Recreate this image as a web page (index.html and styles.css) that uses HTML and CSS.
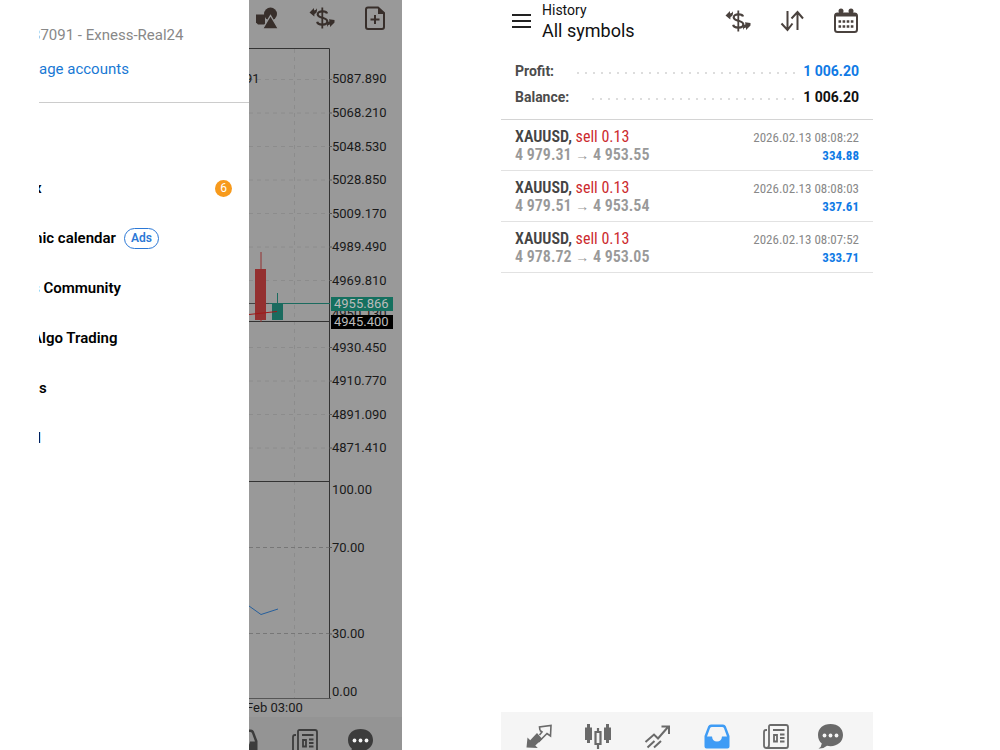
FILE: index.html
```
<!DOCTYPE html>
<html lang="en">
<head>
<meta charset="utf-8">
<meta name="viewport" content="width=device-width, initial-scale=1">
<title>History</title>
<link rel="stylesheet" href="styles.css">
</head>
<body>
<svg class="sprite" aria-hidden="true">
  <symbol id="i-dollar" viewBox="0 0 26 24">
    <path d="M18 7.500C17.500 4.700 8.500 4.300 8.700 8.500 8.900 12.500 18.300 11 18.300 15.300 18.300 19.800 8.800 19.500 8.200 15.800" fill="none" stroke="currentColor" stroke-width="2.200"/>
    <path d="M13.300 1.500v21" stroke="currentColor" stroke-width="1.800"/>
    <path d="M0.500 6.500 5 2v2.600q2.500-.3 3-2.300Q8.500 7.300 5.500 8l-.2 2.500zM25.500 16.500 21 21v-2.500q-2.500.3-3 2.500-.5-5 2.500-5.800l-.5-2 5.500.8z" fill="currentColor"/>
  </symbol>
  <symbol id="i-sort" viewBox="0 0 26 24">
    <path d="M8.500 2v19M2.500 14.500l6 6.500 5-6.500M18.500 21V3M12.500 9.500l6-6.500 5.500 6.500" fill="none" stroke="currentColor" stroke-width="2"/>
  </symbol>
  <symbol id="i-calendar" viewBox="0 0 26 26">
    <rect x="2" y="5.500" width="22" height="18.500" rx="2.500" fill="none" stroke="currentColor" stroke-width="2"/>
    <path d="M2 5.500h22v3H2z" fill="currentColor"/>
    <circle cx="8" cy="3" r="2.500" fill="currentColor"/><circle cx="18" cy="3" r="2.500" fill="currentColor"/>
    <path d="M5.500 13.500h2.600m1.500 0h2.600m1.500 0h2.600m1.500 0h2.600M5.500 18.500h2.600m1.500 0h2.600m1.500 0h2.600m1.500 0h2.600" stroke="currentColor" stroke-width="2.600"/>
  </symbol>
  <symbol id="i-shapes" viewBox="0 0 24 24">
    <circle cx="15.500" cy="8" r="6.500" fill="currentColor"/>
    <path d="M1 8.500h9v10H3l-2-2z" fill="currentColor"/>
    <path d="M15.500 9.500 23.500 23H7.500z" fill="currentColor" stroke="#999" stroke-width="1.400"/>
  </symbol>
  <symbol id="i-newdoc" viewBox="0 0 22 26">
    <path d="M4 2.500h10l6 5.500v14q0 2-2 2H4q-2 0-2-2V4.500q0-2 2-2z" fill="none" stroke="currentColor" stroke-width="2"/>
    <path d="M14 2v7h6.500z" fill="currentColor"/>
    <path d="M11 10v9M6.500 14.500h9" stroke="currentColor" stroke-width="2"/>
  </symbol>
  <symbol id="i-quotes" viewBox="0 0 26 26">
    <path d="M.500 23.500 1.500 13.500l2.700 2.700 6.800-7.200 5.300 6-7 6.600 2.500 2.500z" fill="currentColor"/>
    <path d="M14 6.500 16 8l-2.500 3M14 6.500 13.500 3 25 1.500 24.500 12l-3.500-2.500-8.500 8.500" fill="none" stroke="currentColor" stroke-width="1.600"/>
  </symbol>
  <symbol id="i-candles" viewBox="0 0 26 26">
    <path d="M0 3.500h2V0h3v3.500h2V16H5v3H2v-3H0zM19 3.500h2V0h3v3.500h2V16h-2v3h-3v-3h-2z" fill="currentColor"/>
    <path d="M10.500 8h5v12h-5zM13 4v4M13 20v5" fill="none" stroke="currentColor" stroke-width="2.200"/>
  </symbol>
  <symbol id="i-trend" viewBox="0 0 26 26">
    <path d="M1.500 18 10 10.500l4 4L24 3M17.500 2.500H25v7.500M3.500 23.500l7-6.500M10 23.500l7-6.500" fill="none" stroke="currentColor" stroke-width="2"/>
  </symbol>
  <symbol id="i-inbox" viewBox="0 0 26 26">
    <path fill-rule="evenodd" d="M7 .500h12q2 0 2.800 1.800L25.500 12v10.500q0 2-2 2h-21q-2 0-2-2V12L4.200 2.300Q5 .500 7 .500zM8 3q-1.500 0-2 1.200L3 12.500h5q.5 5 5 5t5-5h5L20 4.200Q19.500 3 18 3z" fill="currentColor"/>
  </symbol>
  <symbol id="i-news" viewBox="0 0 26 26">
    <path d="M7.500 1h15.500q2 0 2 2v19q0 2-2 2H3.500Q6 24 6 21V2.500Q6 1 7.500 1zM4 6H3Q1 6 1 8v13.500Q1 24 3.500 24" fill="none" stroke="currentColor" stroke-width="1.800"/>
    <path d="M10 6h11.500M17 10.500h4.500M17 14h4.500M17 17.500h4.500M11 11h3v6.500h-3z" fill="none" stroke="currentColor" stroke-width="1.800"/>
  </symbol>
  <symbol id="i-chat" viewBox="0 0 26 26">
    <path d="M13.500 0C6 0 1 4.500 1 11c0 4 1.500 6.500 3.800 8.500Q4.500 23 1.500 24.500 6.500 25 10 21.800C19 23.500 26 18.500 26 11 26 4.500 21 0 13.500 0z" fill="currentColor"/>
    <circle cx="7.500" cy="11.500" r="1.900" class="chat-dot"/><circle cx="13.500" cy="11.500" r="1.900" class="chat-dot"/><circle cx="19.500" cy="11.500" r="1.900" class="chat-dot"/>
  </symbol>
</svg>

<main class="stage">
  <section class="phone phone-drawer">
    <aside class="drawer">
      <header class="account">
        <p class="account-name cut">37091 - Exness-Real24</p>
        <a class="account-link" href="#">age accounts</a>
      </header>
      <nav class="menu">
        <a class="menu-item" href="#"><span class="cut-half">x</span><span class="count">6</span></a>
        <a class="menu-item" href="#"><span class="cut-half">nic calendar</span><span class="ads">Ads</span></a>
        <a class="menu-item" href="#"><span class="cut">s Community</span></a>
        <a class="menu-item" href="#"><span class="cut">Algo Trading</span></a>
        <a class="menu-item" href="#"><span>s</span></a>
        <a class="menu-item" href="#"><span class="cut-short">l</span></a>
      </nav>
    </aside>

    <div class="chart">
      <div class="chart-tools">
        <button class="icon-button" aria-label="Objects"><svg width="24" height="24"><use href="#i-shapes"/></svg></button>
        <button class="icon-button" aria-label="Trade"><svg width="26" height="24"><use href="#i-dollar"/></svg></button>
        <button class="icon-button" aria-label="New order"><svg width="22" height="26"><use href="#i-newdoc"/></svg></button>
      </div>
      <svg class="plot" viewBox="0 40 153 677" role="img" aria-label="Price chart">
        <g class="grid">
          <path d="M45.500 49v650M0 79.500h80M0 113h80M0 146.500h80M0 180h80M0 213.500h80M0 247h80M0 280.500h80M0 347.500h80M0 381h80M0 414.500h80M0 448h80"/>
        </g>
        <path class="level" d="M0 547.500h80M0 633.500h80"/>
        <path class="frame" d="M0 48.500h80.500V699M0 481.500h80"/>
        <path class="tick" d="M0 698.500h82M80 79.500h3M80 113h3M80 146.500h3M80 180h3M80 213.500h3M80 247h3M80 280.500h3M80 347.500h3M80 381h3M80 414.500h3M80 448h3M80 547.500h3M80 634h3"/>
        <path class="ask" d="M0 303.500h20"/>
        <path class="bid" d="M20 303.500h61"/>
        <path class="frame" d="M0 321.500h81"/>
        <path class="wick-down" d="M12 252v70"/><rect class="down" x="6" y="269" width="11" height="51"/>
        <path class="wick-up" d="M28.500 293v11"/><rect class="up" x="23" y="304" width="11" height="16"/>
        <path class="average" d="M0 314.500 28 311.500"/>
        <path class="rsi" d="M0 606 12 614.500 29 609"/>
        <g class="scale">
          <text x="-4" y="83">91</text>
          <text x="83" y="83">5087.890</text>
          <text x="83" y="117">5068.210</text>
          <text x="83" y="151">5048.530</text>
          <text x="83" y="184">5028.850</text>
          <text x="83" y="218">5009.170</text>
          <text x="83" y="251">4989.490</text>
          <text x="83" y="285">4969.810</text>
          <text x="83" y="318">4950.130</text>
          <text x="83" y="352">4930.450</text>
          <text x="83" y="385">4910.770</text>
          <text x="83" y="419">4891.090</text>
          <text x="83" y="452">4871.410</text>
          <text x="83" y="494">100.00</text>
          <text x="83" y="552">70.00</text>
          <text x="83" y="638">30.00</text>
          <text x="83" y="696">0.00</text>
          <text x="-3" y="712">Feb 03:00</text>
        </g>
        <rect class="tag-bid" x="82" y="297" width="62" height="14"/>
        <rect class="tag-last" x="82" y="315" width="62" height="14"/>
        <g class="tag-text"><text x="85" y="308">4955.866</text><text x="85" y="326">4945.400</text></g>
      </svg>
      <nav class="tabs tabs-dim">
        <button class="tab" aria-label="History"><svg width="26" height="26"><use href="#i-inbox"/></svg></button>
        <button class="tab" aria-label="News"><svg width="26" height="26"><use href="#i-news"/></svg></button>
        <button class="tab" aria-label="Messages"><svg width="26" height="26"><use href="#i-chat"/></svg></button>
      </nav>
    </div>
  </section>

  <section class="phone phone-history">
    <header class="topbar">
      <button class="icon-button" aria-label="Menu"><svg width="20" height="16"><path d="M0 2h19M0 8h19M0 14h19" stroke="#222" stroke-width="2"/></svg></button>
      <div class="titles">
        <p class="subtitle">History</p>
        <h1 class="title">All symbols</h1>
      </div>
      <div class="actions">
        <button class="icon-button" aria-label="Symbols"><svg width="26" height="24"><use href="#i-dollar"/></svg></button>
        <button class="icon-button" aria-label="Sort"><svg width="26" height="24"><use href="#i-sort"/></svg></button>
        <button class="icon-button" aria-label="Period"><svg width="26" height="26"><use href="#i-calendar"/></svg></button>
      </div>
    </header>
    <div class="summary">
      <div class="summary-row"><span>Profit:</span><span class="leader"></span><span class="gain">1 006.20</span></div>
      <div class="summary-row"><span>Balance:</span><span class="leader"></span><span class="total">1 006.20</span></div>
    </div>
    <ul class="deals">
      <li class="deal">
        <div><p class="symbol">XAUUSD, <span class="side">sell 0.13</span></p><p class="prices">4 979.31 <span class="arrow">→</span> 4 953.55</p></div>
        <div class="result"><time class="time">2026.02.13 08:08:22</time><p class="profit">334.88</p></div>
      </li>
      <li class="deal">
        <div><p class="symbol">XAUUSD, <span class="side">sell 0.13</span></p><p class="prices">4 979.51 <span class="arrow">→</span> 4 953.54</p></div>
        <div class="result"><time class="time">2026.02.13 08:08:03</time><p class="profit">337.61</p></div>
      </li>
      <li class="deal">
        <div><p class="symbol">XAUUSD, <span class="side">sell 0.13</span></p><p class="prices">4 978.72 <span class="arrow">→</span> 4 953.05</p></div>
        <div class="result"><time class="time">2026.02.13 08:07:52</time><p class="profit">333.71</p></div>
      </li>
    </ul>
    <nav class="tabs">
      <button class="tab" aria-label="Quotes"><svg width="26" height="26"><use href="#i-quotes"/></svg></button>
      <button class="tab" aria-label="Chart"><svg width="26" height="26"><use href="#i-candles"/></svg></button>
      <button class="tab" aria-label="Trade"><svg width="26" height="26"><use href="#i-trend"/></svg></button>
      <button class="tab tab-active" aria-label="History"><svg width="26" height="26"><use href="#i-inbox"/></svg></button>
      <button class="tab" aria-label="News"><svg width="26" height="26"><use href="#i-news"/></svg></button>
      <button class="tab" aria-label="Messages"><svg width="26" height="26"><use href="#i-chat"/></svg></button>
    </nav>
  </section>
</main>
</body>
</html>
```
FILE: styles.css
```
* { box-sizing: border-box; }
body { margin: 0; background: #fff; color: #111; font-family: Roboto, "Liberation Sans", sans-serif; font-size: 14px; }
p, h1, ul { margin: 0; padding: 0; font-weight: 400; list-style: none; }
a { color: inherit; text-decoration: none; }
button { border: 0; padding: 0; background: none; color: inherit; font: inherit; }
svg { display: block; }
.sprite { position: absolute; width: 0; height: 0; }

.stage { display: grid; grid-template-columns: 363fr 372fr; column-gap: 9.9vw; height: 100vh; padding: 0 12.7vw 0 3.9vw; overflow: hidden; }
.phone { display: flex; min-width: 0; min-height: 0; overflow: hidden; }

/* Drawer */
.drawer { flex: 1; min-width: 0; overflow: hidden; font-size: 15px; }
.cut { margin-left: -7px; }
.cut-half { margin-left: -5px; }
.cut-short { margin-left: -2px; }
.account { padding-top: 24px; height: 103px; border-bottom: 1px solid #ccc; white-space: nowrap; }
.account-name { color: #888; line-height: 22px; }
.account-link { display: block; margin-top: 12px; color: #1878d4; line-height: 22px; }
.menu { padding-top: 60px; }
.menu-item { display: flex; align-items: center; height: 50px; color: #000; font-weight: 600; white-space: nowrap; }
.count { display: grid; place-items: center; width: 17px; height: 17px; margin: 0 17px 0 auto; border-radius: 50%; background: #f79a1c; color: #fff; font-size: 12px; font-weight: 400; }
.ads { margin-left: 8px; padding: 0 6px; border: 1px solid #2b78d6; border-radius: 11px; color: #2b78d6; font-size: 12px; line-height: 19px; }

/* Chart */
.chart { display: flex; flex: none; flex-direction: column; width: 153px; background: #999; }
.chart-tools { display: flex; align-items: center; justify-content: space-between; height: 40px; padding: 0 16px 4px 6px; color: #382f2b; }
.plot { flex: none; width: 100%; }
.plot path { fill: none; stroke-width: 1; }
.grid path { stroke: #8c8c8c; stroke-dasharray: 4 4; }
.level { stroke: #777; stroke-dasharray: 4 3; }
.frame { stroke: #333; }
.tick { stroke: #555; }
.ask { stroke: #444; }
.bid, .wick-up { stroke: #1b6b5f; }
.up { fill: #1b6b5f; }
.wick-down { stroke: #943030; }
.down { fill: #943030; }
.average { stroke: #a01818; }
.rsi { stroke: #265f9c; }
.scale { fill: #1a1a1a; font-size: 13px; }
.tag-bid { fill: #15705f; }
.tag-last { fill: #000; }
.tag-text { fill: #bbb; font-size: 13px; }

/* Tab bar */
.tabs { display: flex; height: 38px; padding: 12px 18px 0 8px; background: #f5f5f5; color: #6a6a6a; overflow: hidden; }
.tab { display: flex; flex: 6; justify-content: center; min-width: 0; }
.tab:last-child { flex: 5; }
.tab-active { color: #3f9cf5; }
.chat-dot { fill: #f5f5f5; }
.tabs-dim { flex: 1; justify-content: flex-end; min-height: 0; padding-right: 17px; background: #949494; color: #3c3c3c; }
.tabs-dim .tab { flex: none; width: 60px; }
.tabs-dim .tab:last-child { width: 50px; }
.tabs-dim .chat-dot { fill: #949494; }

/* History */
.phone-history { flex-direction: column; }
.topbar { display: flex; align-items: center; height: 58px; padding: 0 14px 16px 11px; }
.titles { flex: 1; margin-left: 10px; }
.subtitle { line-height: 20px; }
.title { font-size: 18px; line-height: 22px; }
.actions { display: flex; align-items: center; gap: 28px; color: #4a423e; }
.summary { padding: 0 14px 9px; border-bottom: 1px solid #d4d4d4; }
.summary-row { display: flex; align-items: center; height: 26px; color: #4c4c4c; font-weight: 700; }
.leader { flex: 1; height: 4px; margin: 4px 8px 0 20px; background: radial-gradient(circle, #ddd 1px, transparent 1px) 0 0 / 8px 4px; }
.gain { color: #0f7ae5; }
.total { color: #111; }
.deals { flex: 1; }
.deal { display: flex; justify-content: space-between; height: 51px; padding: 8px 14px 5px; border-bottom: 1px solid #e2e2e2; font-family: "Roboto Condensed", Roboto, "Liberation Sans", sans-serif; font-size: 16px; line-height: 18px; white-space: nowrap; }
.symbol { color: #444; font-weight: 600; }
.side { color: #cc2a2e; font-weight: 400; }
.prices { color: #999; font-weight: 600; }
.arrow { font-size: 14px; }
.result { padding-top: 1px; text-align: right; font-size: 13px; }
.time { display: block; color: #888; }
.profit { color: #0f7ae5; font-weight: 700; }
```
